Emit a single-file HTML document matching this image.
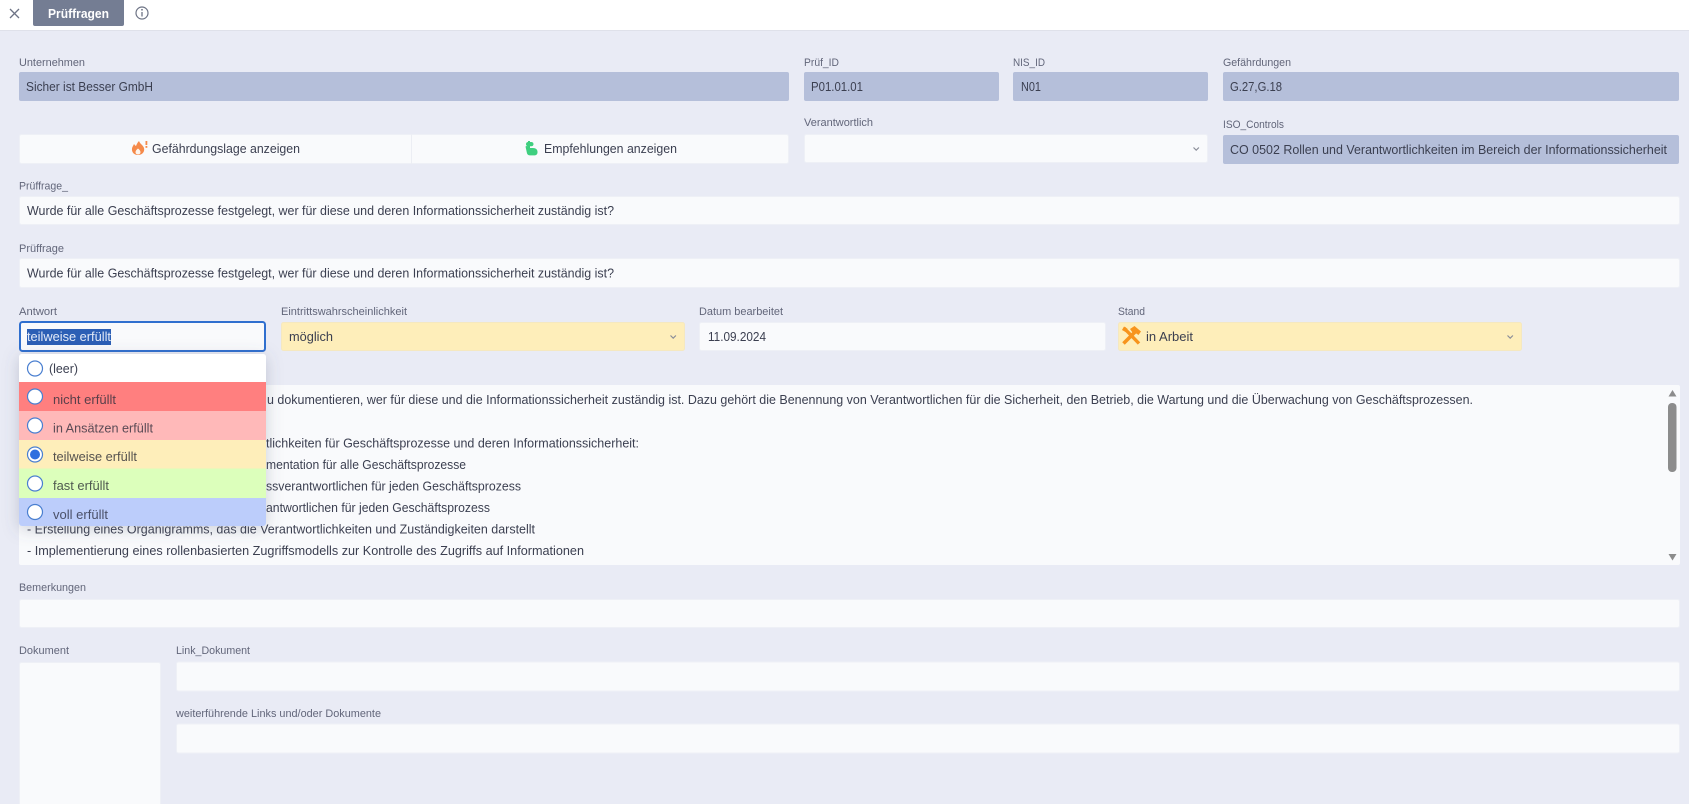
<!DOCTYPE html>
<html lang="de">
<head>
<meta charset="utf-8">
<title>Prüffragen</title>
<style>
html,body{margin:0;padding:0;width:1689px;height:804px;overflow:hidden;background:#e9ebf5}
svg{display:block}
text{font-family:"Liberation Sans","Noto Sans CJK JP",sans-serif;white-space:pre}
.l{font-size:11px;fill:#62667a}
.v{font-size:13px;fill:#3b3f50}
.f{fill:#f9fafc;stroke:#eef0f6;stroke-width:1}
.r{fill:#b5bfda}
.y{fill:#feeeba;stroke:#f5e8c0;stroke-width:1}
.c{fill:none;stroke:#8a8d98;stroke-width:1.2}
.rad{fill:#fff;stroke:#4a7fd0;stroke-width:1.2}
</style>
</head>
<body>
<svg width="1689" height="804" viewBox="0 0 1689 804" xmlns="http://www.w3.org/2000/svg">
<defs>
<filter id="sh" x="-20%" y="-20%" width="140%" height="140%"><feDropShadow dx="0" dy="3" stdDeviation="8" flood-color="#5a6078" flood-opacity=".28"/></filter>
<clipPath id="dd"><rect x="19" y="354" width="247" height="172" rx="3"/></clipPath>
</defs>
<rect width="1689" height="804" fill="#e9ebf5"/>

<!-- header -->
<rect width="1689" height="30" fill="#fff"/>
<rect y="30" width="1689" height="1" fill="#dfe1ea"/>
<path d="M10 9l9 9M19 9l-9 9" stroke="#6d7385" stroke-width="1.3" fill="none"/>
<rect x="33" y="-4" width="91" height="30" rx="2" fill="#747d93"/>
<text x="48" y="18" font-size="13" font-weight="700" fill="#fff" textLength="61" lengthAdjust="spacingAndGlyphs">Prüffragen</text>
<circle cx="142" cy="13" r="6" fill="none" stroke="#6d7385" stroke-width="1.2"/>
<path d="M142 12v4.5" stroke="#6d7385" stroke-width="1.3"/><circle cx="142" cy="9.8" r=".9" fill="#6d7385"/>

<!-- row 1 -->
<text class="l" x="19" y="66" textLength="66" lengthAdjust="spacingAndGlyphs">Unternehmen</text>
<rect class="r" x="19" y="72" width="770" height="29" rx="2"/>
<text class="v" x="26" y="91" textLength="127" lengthAdjust="spacingAndGlyphs">Sicher ist Besser GmbH</text>
<text class="l" x="804" y="66" textLength="35" lengthAdjust="spacingAndGlyphs">Prüf_ID</text>
<rect class="r" x="804" y="72" width="195" height="29" rx="2"/>
<text class="v" x="811" y="91" textLength="52" lengthAdjust="spacingAndGlyphs">P01.01.01</text>
<text class="l" x="1013" y="66" textLength="32" lengthAdjust="spacingAndGlyphs">NIS_ID</text>
<rect class="r" x="1013" y="72" width="195" height="29" rx="2"/>
<text class="v" x="1021" y="91" textLength="20" lengthAdjust="spacingAndGlyphs">N01</text>
<text class="l" x="1223" y="66" textLength="68" lengthAdjust="spacingAndGlyphs">Gefährdungen</text>
<rect class="r" x="1223" y="72" width="456" height="29" rx="2"/>
<text class="v" x="1230" y="91" textLength="52" lengthAdjust="spacingAndGlyphs">G.27,G.18</text>

<!-- row 2 -->
<rect class="f" x="19.500" y="134.500" width="769" height="29" rx="2"/>
<rect x="411" y="134" width="1" height="30" fill="#eceef4"/>
<path d="M139 141c1 3 4 4 5 7 1 4-2 7-6 7s-6.500-3-6-6.500c.3-2 1.500-3 2-4.500.8 1 1.200 1.500 2 2 .8-2 1.500-3.500 3-5z" fill="#f58a4b"/>
<path d="M138 148.500c1.500 1.200 2.500 2.300 2.500 3.800 0 1.300-1 2.200-2.500 2.200s-2.500-.9-2.500-2.200c0-1.500 1-2.600 2.500-3.800z" fill="#fdf5ee"/>
<rect x="145.500" y="141" width="1.800" height="4" fill="#f58a4b"/><rect x="145.500" y="146" width="1.800" height="1.800" fill="#f58a4b"/>
<text class="v" x="152" y="153" textLength="148" lengthAdjust="spacingAndGlyphs">Gefährdungslage anzeigen</text>
<path d="M525.500 146.500c1-.8 2.300-.6 3.200.3l1.300 1.200h3c2.800 0 4.500 1.600 4.500 3.700v.8c0 1.700-1.300 2.900-3 2.900h-4.500c-1.500 0-2.500-.8-3-2z" fill="#3fcf7f"/>
<rect x="526" y="142" width="7.500" height="4.300" rx="2.100" fill="#3fcf7f"/>
<rect x="528" y="141" width="2" height="7" fill="#3fcf7f"/>
<text class="v" x="544" y="153" textLength="133" lengthAdjust="spacingAndGlyphs">Empfehlungen anzeigen</text>
<text class="l" x="804" y="126" textLength="69" lengthAdjust="spacingAndGlyphs">Verantwortlich</text>
<rect class="f" x="804.500" y="134.500" width="403" height="28" rx="2"/>
<path class="c" d="M1193.500 147.500l2.700 2.700 2.700-2.700"/>
<text class="l" x="1223" y="128" textLength="61" lengthAdjust="spacingAndGlyphs">ISO_Controls</text>
<rect class="r" x="1223" y="135" width="456" height="29" rx="2"/>
<text class="v" x="1230" y="154" textLength="437" lengthAdjust="spacingAndGlyphs">CO 0502 Rollen und Verantwortlichkeiten im Bereich der Informationssicherheit</text>

<!-- Prüffrage -->
<text class="l" x="19" y="189.500" textLength="49" lengthAdjust="spacingAndGlyphs">Prüffrage_</text>
<rect class="f" x="19.500" y="196.500" width="1660" height="28" rx="2"/>
<text class="v" x="27" y="215" textLength="587" lengthAdjust="spacingAndGlyphs">Wurde für alle Geschäftsprozesse festgelegt, wer für diese und deren Informationssicherheit zuständig ist?</text>
<text class="l" x="19" y="252" textLength="45" lengthAdjust="spacingAndGlyphs">Prüffrage</text>
<rect class="f" x="19.500" y="258.500" width="1660" height="29" rx="2"/>
<text class="v" x="27" y="277.500" textLength="587" lengthAdjust="spacingAndGlyphs">Wurde für alle Geschäftsprozesse festgelegt, wer für diese und deren Informationssicherheit zuständig ist?</text>

<!-- row Antwort -->
<text class="l" x="19" y="315" textLength="38" lengthAdjust="spacingAndGlyphs">Antwort</text>
<rect x="20" y="322" width="245" height="29" rx="2.500" fill="#f9fafc" stroke="#2f6fcf" stroke-width="2"/>
<rect x="27" y="329" width="84" height="16" fill="#2c5fb5"/>
<text x="27" y="341" font-size="13" fill="#e4ebf8" textLength="84" lengthAdjust="spacingAndGlyphs">teilweise erfüllt</text>
<text class="l" x="281" y="315" textLength="126" lengthAdjust="spacingAndGlyphs">Eintrittswahrscheinlichkeit</text>
<rect class="y" x="281.500" y="322.500" width="403" height="28" rx="2"/>
<text class="v" x="289" y="341" textLength="44" lengthAdjust="spacingAndGlyphs">möglich</text>
<path class="c" d="M670.500 335.500l2.700 2.700 2.700-2.700"/>
<text class="l" x="699" y="315" textLength="84" lengthAdjust="spacingAndGlyphs">Datum bearbeitet</text>
<rect class="f" x="699.500" y="322.500" width="406" height="28" rx="2"/>
<text class="v" x="708" y="341" textLength="58" lengthAdjust="spacingAndGlyphs">11.09.2024</text>
<text class="l" x="1118" y="315" textLength="27" lengthAdjust="spacingAndGlyphs">Stand</text>
<rect class="y" x="1118.500" y="322.500" width="403" height="28" rx="2"/>
<path d="M1124 328l15 15.500" stroke="#f7941d" stroke-width="3.400" fill="none"/>
<path d="M1123.500 343.500l12.500-12.500" stroke="#f7941d" stroke-width="3.600" fill="none"/>
<path d="M1130 329l4.500-3 6.500 5.500-2.500 3.500-3-2-3-.5z" fill="#f7941d"/>
<path d="M1122 330l2-3.500 3.500 2.200-1.500 3.500z" fill="#f7941d"/>
<text class="v" x="1146" y="341" textLength="47" lengthAdjust="spacingAndGlyphs">in Arbeit</text>
<path class="c" d="M1507.500 335.500l2.700 2.700 2.700-2.700"/>

<!-- textarea -->
<rect x="19" y="385" width="1661" height="180" rx="2" fill="#f9fafc"/>
<text class="v" x="27" y="404" textLength="238" lengthAdjust="spacingAndGlyphs">Für alle Geschäftsprozesse ist genau z</text>
<text class="v" x="267" y="404" textLength="1206" lengthAdjust="spacingAndGlyphs">u dokumentieren, wer für diese und die Informationssicherheit zuständig ist. Dazu gehört die Benennung von Verantwortlichen für die Sicherheit, den Betrieb, die Wartung und die Überwachung von Geschäftsprozessen.</text>
<text class="v" x="266" y="447.500" textLength="373" lengthAdjust="spacingAndGlyphs">tlichkeiten für Geschäftsprozesse und deren Informationssicherheit:</text>
<text class="v" x="266" y="469" textLength="200" lengthAdjust="spacingAndGlyphs">mentation für alle Geschäftsprozesse</text>
<text class="v" x="266" y="490.500" textLength="255" lengthAdjust="spacingAndGlyphs">ssverantwortlichen für jeden Geschäftsprozess</text>
<text class="v" x="266" y="512" textLength="224" lengthAdjust="spacingAndGlyphs">antwortlichen für jeden Geschäftsprozess</text>
<text class="v" x="27" y="533.500" textLength="508" lengthAdjust="spacingAndGlyphs">- Erstellung eines Organigramms, das die Verantwortlichkeiten und Zuständigkeiten darstellt</text>
<text class="v" x="27" y="555" textLength="557" lengthAdjust="spacingAndGlyphs">- Implementierung eines rollenbasierten Zugriffsmodells zur Kontrolle des Zugriffs auf Informationen</text>
<path d="M1668.500 396.500l4-6.500 4 6.500z" fill="#8c8c8c"/>
<rect x="1668" y="403" width="8.500" height="69" rx="4" fill="#8c8c8c"/>
<path d="M1668.500 554l4 6.500 4-6.500z" fill="#8c8c8c"/>

<!-- Bemerkungen / Dokument -->
<text class="l" x="19" y="591" textLength="67" lengthAdjust="spacingAndGlyphs">Bemerkungen</text>
<rect class="f" x="19.500" y="599.500" width="1660" height="28" rx="2"/>
<text class="l" x="19" y="654" textLength="50" lengthAdjust="spacingAndGlyphs">Dokument</text>
<rect class="f" x="19.500" y="662.500" width="141" height="160" rx="2"/>
<text class="l" x="176" y="654" textLength="74" lengthAdjust="spacingAndGlyphs">Link_Dokument</text>
<rect class="f" x="176.500" y="662" width="1503" height="29" rx="2"/>
<text class="l" x="176" y="717" textLength="205" lengthAdjust="spacingAndGlyphs">weiterführende Links und/oder Dokumente</text>
<rect class="f" x="176.500" y="724" width="1503" height="29" rx="2"/>

<!-- dropdown -->
<rect x="19" y="354" width="247" height="172" rx="3" fill="#fff" filter="url(#sh)"/>
<g clip-path="url(#dd)">
<rect x="19" y="354" width="247" height="28" fill="#fff"/>
<rect x="19" y="382" width="247" height="29" fill="#ff7f7f"/>
<rect x="19" y="411" width="247" height="29" fill="#ffb9b9"/>
<rect x="19" y="440" width="247" height="28.500" fill="#feeeba"/>
<rect x="19" y="468.500" width="247" height="29.500" fill="#dcffbb"/>
<rect x="19" y="498" width="247" height="28" fill="#bccdfb"/>
</g>
<circle class="rad" cx="35" cy="368.500" r="7.500"/>
<circle class="rad" cx="35" cy="396.500" r="7.500"/>
<circle class="rad" cx="35" cy="425.500" r="7.500"/>
<circle class="rad" cx="35" cy="454.500" r="7.500"/>
<circle cx="35" cy="454.500" r="5" fill="#2f6fdf"/>
<circle class="rad" cx="35" cy="483.500" r="7.500"/>
<circle class="rad" cx="35" cy="512" r="7.500"/>
<text class="v" x="49" y="373" textLength="29" lengthAdjust="spacingAndGlyphs">(leer)</text>
<text class="v" x="53" y="404" textLength="63" lengthAdjust="spacingAndGlyphs" style="fill:#5a3f4a">nicht erfüllt</text>
<text class="v" x="53" y="432.500" textLength="100" lengthAdjust="spacingAndGlyphs" style="fill:#5a4a55">in Ansätzen erfüllt</text>
<text class="v" x="53" y="461" textLength="84" lengthAdjust="spacingAndGlyphs" style="fill:#55524f">teilweise erfüllt</text>
<text class="v" x="53" y="490" textLength="56" lengthAdjust="spacingAndGlyphs" style="fill:#4f5a50">fast erfüllt</text>
<text class="v" x="53" y="519" textLength="55" lengthAdjust="spacingAndGlyphs" style="fill:#4a5068">voll erfüllt</text>
</svg>
</body>
</html>
